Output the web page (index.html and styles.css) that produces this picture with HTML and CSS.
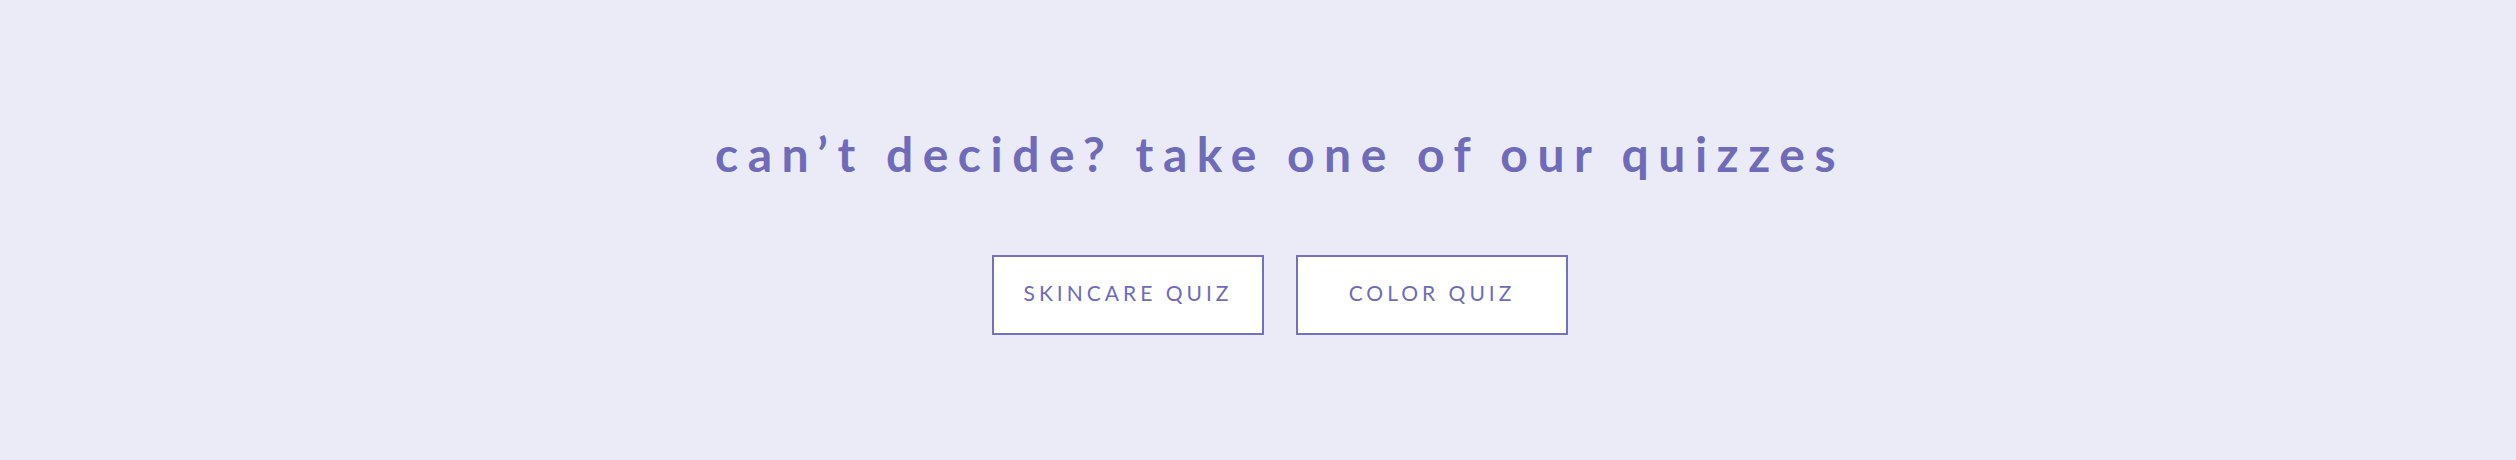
FILE: index.html
```html
<!DOCTYPE html>
<html lang="en">
<head>
  <meta charset="UTF-8" />
  <title>Quizzes</title>
  <link rel="stylesheet" href="styles.css">
</head>
<body>

<section class="quiz-cta">
  <h2 class="quiz-title">can’t decide? take one of our quizzes</h2>
  <div class="quiz-buttons">
    <a class="quiz-button" href="#">Skincare Quiz</a>
    <a class="quiz-button" href="#">Color Quiz</a>
  </div>
</section>

</body>
</html>
```

FILE: styles.css
```css
* {
  margin: 0;
  padding: 0;
  box-sizing: border-box;
}

html, body {
  height: 100%;
  background: #ebeaf7;
  font-family: 'Lato', 'Open Sans', sans-serif;
  color: #6f6bb8;
}

.quiz-cta {
  height: 100%;
  display: flex;
  flex-direction: column;
  align-items: center;
  padding: 124px 0 0 44px;
}

.quiz-title {
  font-size: 48px;
  font-weight: 700;
  letter-spacing: 9.5px;
  line-height: 60px;
  text-transform: lowercase;
}

.quiz-buttons {
  display: flex;
  gap: 32px;
  margin-top: 71px;
}

.quiz-button {
  display: flex;
  align-items: center;
  justify-content: center;
  width: 272px;
  height: 80px;
  padding-bottom: 6px;
  background: #fff;
  border: 2px solid #7570c0;
  color: #6f6bb8;
  font-size: 21px;
  letter-spacing: 4px;
  text-transform: uppercase;
  text-decoration: none;
}
```
